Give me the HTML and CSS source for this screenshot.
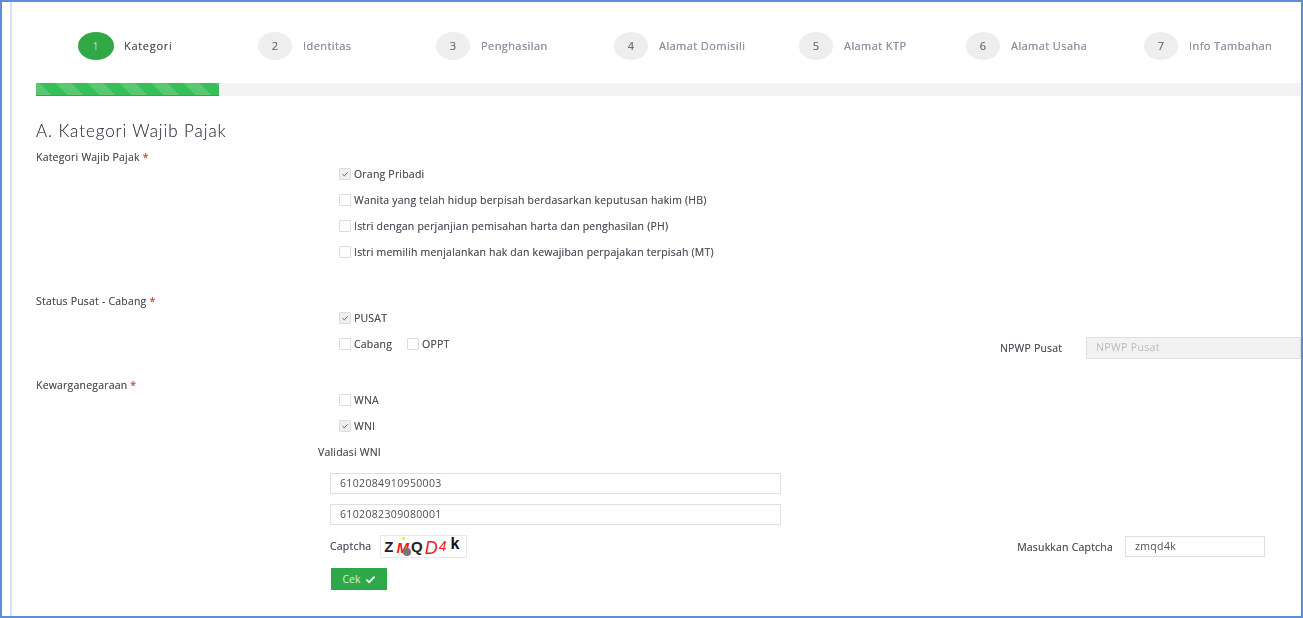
FILE: index.html
```html
<!DOCTYPE html>
<html lang="id">
<head>
<meta charset="utf-8">
<title>Kategori Wajib Pajak</title>
<link rel="stylesheet" href="styles.css">
</head>
<body>
<div class="frame">
  <div class="inner">
    <ol class="steps">
      <li class="step active"><span class="num">1</span><span class="step-name">Kategori</span></li>
      <li class="step"><span class="num">2</span><span class="step-name">Identitas</span></li>
      <li class="step"><span class="num">3</span><span class="step-name">Penghasilan</span></li>
      <li class="step"><span class="num">4</span><span class="step-name">Alamat Domisili</span></li>
      <li class="step"><span class="num">5</span><span class="step-name">Alamat KTP</span></li>
      <li class="step"><span class="num">6</span><span class="step-name">Alamat Usaha</span></li>
      <li class="step"><span class="num">7</span><span class="step-name">Info Tambahan</span></li>
    </ol>
    <div class="progress"><div class="progress-fill"></div></div>
    <h1 class="title">A. Kategori Wajib Pajak</h1>

    <div class="label label-first">Kategori Wajib Pajak <span class="req">*</span></div>
    <div class="checks checks-first">
      <div class="check"><span class="box on"><svg viewBox="0 0 12 12"><path d="M3 6.2 5.1 8.2 9.2 4"/></svg></span>Orang Pribadi</div>
      <div class="check"><span class="box"></span>Wanita yang telah hidup berpisah berdasarkan keputusan hakim (HB)</div>
      <div class="check"><span class="box"></span>Istri dengan perjanjian pemisahan harta dan penghasilan (PH)</div>
      <div class="check"><span class="box"></span>Istri memilih menjalankan hak dan kewajiban perpajakan terpisah (MT)</div>
    </div>

    <div class="label label-status">Status Pusat - Cabang <span class="req">*</span></div>
    <div class="checks checks-status">
      <div class="check"><span class="box on"><svg viewBox="0 0 12 12"><path d="M3 6.2 5.1 8.2 9.2 4"/></svg></span>PUSAT</div>
      <div class="check-split">
        <div class="check-inline">
          <div class="check"><span class="box"></span>Cabang</div>
          <div class="check"><span class="box"></span>OPPT</div>
        </div>
        <div class="npwp">
          <span class="field-label npwp-label">NPWP Pusat</span>
          <input class="input input-npwp" placeholder="NPWP Pusat" disabled>
        </div>
      </div>
    </div>

    <div class="label label-warga">Kewarganegaraan <span class="req">*</span></div>
    <div class="checks checks-warga">
      <div class="check"><span class="box"></span>WNA</div>
      <div class="check"><span class="box on"><svg viewBox="0 0 12 12"><path d="M3 6.2 5.1 8.2 9.2 4"/></svg></span>WNI</div>
    </div>

    <div class="validasi">Validasi WNI</div>
    <div class="wni-fields">
      <input class="input input-wide" value="6102084910950003">
      <input class="input input-wide" value="6102082309080001">
      <div class="captcha-row">
        <div class="captcha-left">
          <span class="field-label captcha-label">Captcha</span>
          <div class="captcha-img">
            <span class="c-z">Z</span><span class="c-m">M</span><span class="c-q">Q</span><span class="c-d">D</span><span class="c-4">4</span><span class="c-k">k</span>
            <i class="c-blob"></i><i class="c-dot"></i>
          </div>
        </div>
        <div class="captcha-right">
          <span class="field-label">Masukkan Captcha</span>
          <input class="input input-captcha" value="zmqd4k">
        </div>
      </div>
      <button class="btn" type="button">Cek <svg viewBox="0 0 12 10"><path d="M1.5 5.2 4.5 8 10.5 1.8"/></svg></button>
    </div>
  </div>
</div>
</body>
</html>
```
FILE: styles.css
```css
* { box-sizing: border-box; }
html, body { margin: 0; padding: 0; background: #fff; }
body {
  width: 1303px;
  height: 618px;
  overflow: hidden;
  font-family: "Open Sans", "Liberation Sans", sans-serif;
  font-size: 10.5px;
  letter-spacing: 0.2px;
  color: #4b4f58;
  text-shadow: 0 0 0.6px rgba(60, 64, 80, 0.55);
}
.frame {
  width: 1303px;
  height: 618px;
  border: 2px solid #5a8fdb;
  overflow: hidden;
  filter: blur(0.35px);
}
.inner {
  height: 100%;
  margin-left: 8px;
  padding-left: 24px;
  border-left: 2px solid #d5e3f6;
}
.steps {
  list-style: none;
  margin: 0;
  padding: 30px 0 0 42px;
  display: grid;
  grid-template-columns: 180px 178px 178px 185px 167px 178px auto;
}
.step { display: flex; align-items: center; gap: 11px; height: 28px; color: #8d94a8; font-size: 11px; letter-spacing: 0.42px; }
.step-name { margin-top: -2px; }
.num {
  width: 34px;
  height: 28px;
  padding-bottom: 1px;
  border-radius: 50%;
  background: #eeeeee;
  color: #6d7480;
  display: flex;
  align-items: center;
  justify-content: center;
  font-size: 11px;
}
.step.active { color: #4d5058; gap: 10px; letter-spacing: 0.7px; }
.step.active .num { width: 36px; background: #31a846; color: #c9ecc9; }
.progress { height: 13px; margin-top: 23px; background: #f3f3f3; }
.progress-fill {
  width: 183px;
  height: 100%;
  background-color: #36c05a;
  background-image: repeating-linear-gradient(45deg, #58c972 0 11px, #36c05a 11px 22.6px);
  border-bottom: 1px solid #2aaa48;
}
.title {
  margin: 23px 0 0;
  height: 24px;
  line-height: 24px;
  font-family: Lato, "Open Sans", sans-serif;
  font-weight: 300;
  font-size: 17px;
  letter-spacing: 0.92px;
  color: #3a3f4a;
}
.label { height: 12px; line-height: 12px; color: #4b4f58; }
.req { color: #e53935; }
.label-first { margin-top: 8px; }
.label-status { margin-top: 36px; }
.label-warga { margin-top: 20px; }
.checks { display: flex; flex-direction: column; gap: 12px; padding-left: 303px; }
.checks-first, .checks-status { margin-top: 4px; }
.checks-warga { margin-top: 2px; }
.check { display: flex; align-items: center; gap: 3px; height: 14px; color: #4b4f58; }
.box {
  width: 12px;
  height: 12px;
  flex: none;
  border: 1px solid #dcdcdc;
  border-radius: 1px;
  background: #fff;
}
.box.on { background: #efefef; }
.box svg { display: block; width: 10px; height: 10px; fill: none; stroke: #666; stroke-width: 1.2; }
.check-split { display: flex; justify-content: space-between; height: 22px; }
.check-inline { display: flex; gap: 15px; }
.npwp { display: flex; align-items: center; height: 22px; }
.field-label { color: #4b4f58; }
.npwp-label { width: 86px; }
.input {
  display: block;
  height: 21px;
  padding: 0 9px 2px;
  border: 1px solid #dfdfdf;
  background: #fff;
  font: 10.5px "Open Sans", sans-serif;
  letter-spacing: 0.35px;
  color: #4b4f58;
  outline: none;
  border-radius: 0;
}
.input-npwp { width: 215px; height: 22px; background: #f2f2f2; }
.input-npwp::placeholder { color: #b8bcc2; opacity: 1; }
.validasi { height: 12px; line-height: 12px; margin: 13px 0 0 282px; }
.wni-fields { margin: 15px 0 0 294px; display: flex; flex-direction: column; gap: 10px; align-items: flex-start; }
.input-wide { width: 451px; }
.captcha-row { display: flex; justify-content: space-between; align-items: center; width: 935px; height: 23px; }
.captcha-left { display: flex; align-items: center; gap: 9px; }
.captcha-label { margin-top: -2px; }
.captcha-right { display: flex; align-items: center; gap: 12px; }
.input-captcha { width: 140px; }
.captcha-img {
  position: relative;
  display: flex;
  align-items: center;
  width: 87px;
  height: 23px;
  padding-left: 3px;
  border: 1px solid #e8e8e8;
  background: #fff;
  font-family: "Liberation Sans", sans-serif;
  font-size: 15px;
  letter-spacing: 0;
  text-shadow: none;
  overflow: hidden;
}
.captcha-img span { display: block; }
.c-z, .c-q { color: #222; font-weight: 700; }
.c-z { margin-right: 3px; }
.c-m, .c-d, .c-4 { color: #ee1c25; font-style: italic; }
.c-m { margin-top: 2px; margin-right: 2px; font-weight: 700; }
.c-q { margin-right: 2px; margin-top: -1px; }
.c-d { font-size: 18px; margin-top: 3px; }
.c-4 { font-size: 14px; margin-top: -1px; margin-left: 1px; }
.c-k { color: #111; font-size: 16px; font-weight: 700; margin-top: -6px; margin-left: 4px; }
.c-blob {
  position: absolute;
  left: 22px;
  top: 12px;
  width: 8px;
  height: 8px;
  border-radius: 50%;
  background: #777;
}
.c-dot {
  position: absolute;
  left: 21px;
  top: 1px;
  width: 3px;
  height: 3px;
  border-radius: 50%;
  background: #f5e23c;
}
.btn {
  display: flex;
  align-items: center;
  gap: 4px;
  justify-content: center;
  width: 56px;
  height: 22px;
  padding: 0;
  border: 1px solid #28a745;
  background: #2fa84a;
  color: #d6f0d8;
  font: 10.5px "Open Sans", sans-serif;
  margin-left: 1px;
}
.btn svg { width: 11px; height: 9px; fill: none; stroke: #fff; stroke-width: 2; }
```
